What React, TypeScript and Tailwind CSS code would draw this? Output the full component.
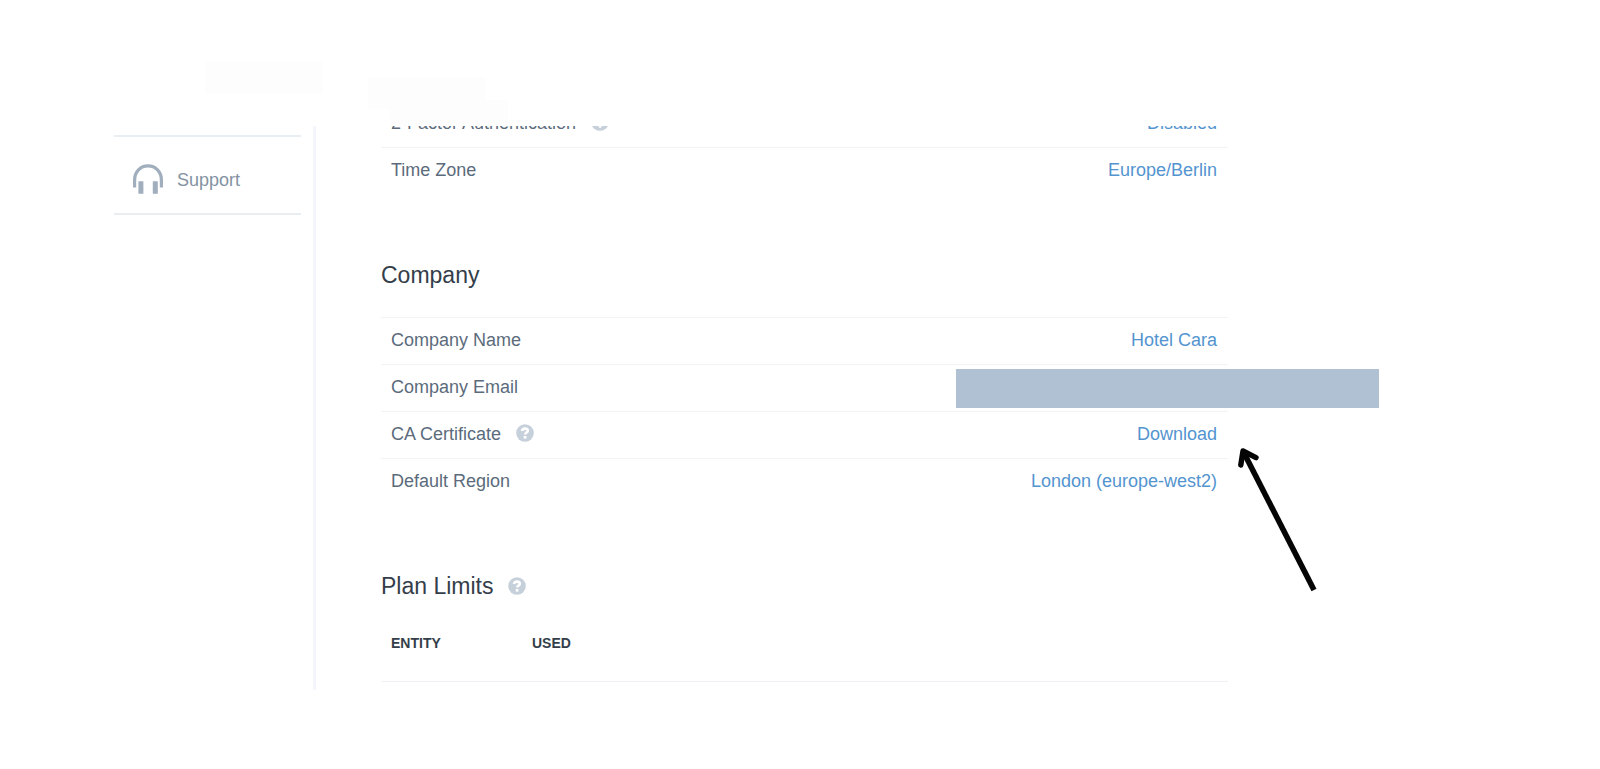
import type { ReactNode } from "react";

function HelpIcon() {
  return (
    <button type="button" aria-label="Help" className="block size-[18px] shrink-0">
      <svg viewBox="0 0 18 18" className="size-[18px]" aria-hidden="true">
        <circle cx="9" cy="9" r="8.8" fill="#c6d0db" />
        <path
          d="M6 7C6.2 5.3 7.4 4.6 9 4.6c1.7 0 2.8.8 2.8 2.2 0 1.8-2.6 1.7-2.6 3.8"
          fill="none"
          stroke="#fff"
          strokeWidth="2.6"
        />
        <rect x="7.7" y="11.9" width="2.8" height="2.8" rx="0.7" fill="#fff" />
      </svg>
    </button>
  );
}

function Headphones() {
  return (
    <svg viewBox="0 0 32 32" className="size-8 shrink-0" aria-hidden="true">
      <path d="M2.6 23.4V16C2.6 7.7 8.4 1.9 16 1.9s13.4 5.8 13.4 14.1v7.4" fill="none" stroke="#a0aebd" strokeWidth="3.2" />
      <rect x="6.4" y="17.2" width="5" height="12.6" rx="0.6" fill="#a0aebd" />
      <rect x="20.8" y="17.2" width="5" height="12.6" rx="0.6" fill="#a0aebd" />
    </svg>
  );
}

function Arrow() {
  return (
    <svg
      viewBox="0 0 80 148"
      className="pointer-events-none absolute top-[33px] -right-[90px] h-[148px] w-20"
      fill="none"
      stroke="#050505"
      aria-hidden="true"
    >
      <path d="M6 8 76 145" strokeWidth="5.6" />
      <path d="M2.8 20 5 6 18 12.6" strokeWidth="5.4" strokeLinecap="round" strokeLinejoin="round" />
    </svg>
  );
}

type RowProps = { label: string; help?: boolean; value?: string; children?: ReactNode };

function Row({ label, help, value, children }: RowProps) {
  return (
    <div className="relative flex h-[47px] shrink-0 items-center justify-between border-t border-[#f1f3f6] pr-[11px] pb-[2px] pl-[10px]">
      <dt className="flex gap-[15px] text-[#5b6b7c]">
        {label}
        {help && (
          <span className="pt-[2px]">
            <HelpIcon />
          </span>
        )}
      </dt>
      <dd>
        {value && (
          <a href="#" className="text-[#5394cf]">
            {value}
          </a>
        )}
      </dd>
      {children}
    </div>
  );
}

export default function App() {
  return (
    <div className="min-h-screen bg-white font-['Liberation_Sans',Arial,sans-serif] text-[18px] leading-6">
      <header className="relative h-[126px]">
        <div className="absolute top-[62px] left-[205px] h-[32px] w-[118px] bg-[#fdfdfd]" />
        <div className="absolute top-[77px] left-[368px] h-[32px] w-[118px] bg-[#fdfdfd]" />
        <div className="absolute top-[100px] left-[390px] h-[26px] w-[118px] bg-[#fdfdfd]" />
      </header>

      <div className="flex">
        <aside className="w-[316px] shrink-0 border-r-3 border-[#f3f6fa] pt-[9px] pr-3 pl-[114px]">
          <nav className="border-y-2 border-[#e9eef3]">
            <a href="#" className="flex h-[76px] items-center gap-[13px] pt-[10px] pl-[18px] text-[#8492a2]">
              <Headphones />
              Support
            </a>
          </nav>
        </aside>

        <main className="min-w-0 flex-1 pr-[372px] pb-2 pl-[65px]">
          <dl className="flex h-[21px] flex-col justify-end overflow-hidden">
            <Row label="2-Factor Authentication" help value="Disabled" />
          </dl>
          <dl>
            <Row label="Time Zone" value="Europe/Berlin" />
          </dl>

          <section className="pt-[65px]">
            <h2 className="pb-[26px] text-[23px] leading-8 text-[#343e4a]">Company</h2>
            <dl>
              <Row label="Company Name" value="Hotel Cara" />
              <Row label="Company Email">
                <div className="absolute top-1 -right-[151px] h-[39px] w-[423px] bg-[#b1c1d4]" />
              </Row>
              <Row label="CA Certificate" help value="Download">
                <Arrow />
              </Row>
              <Row label="Default Region" value="London (europe-west2)" />
            </dl>
          </section>

          <section className="pt-[65px]">
            <div className="flex items-center gap-[15px]">
              <h2 className="text-[23px] leading-8 text-[#343e4a]">Plan Limits</h2>
              <HelpIcon />
            </div>
            <table className="w-full table-fixed text-left text-[14px] text-[#343e4a]">
              <thead>
                <tr className="h-[79px] border-b border-[#eef1f5]">
                  <th scope="col" className="w-[141px] pt-1 pl-[10px]">
                    ENTITY
                  </th>
                  <th scope="col" className="pt-1 pl-[10px]">
                    USED
                  </th>
                </tr>
              </thead>
            </table>
          </section>
        </main>
      </div>
    </div>
  );
}
